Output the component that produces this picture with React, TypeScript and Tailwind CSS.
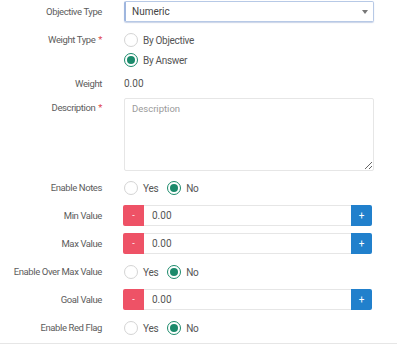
import { useState } from 'react';

const Radio = ({ checked, label, onClick }: { checked: boolean; label: string; onClick?: () => void }) => (
  <button type="button" onClick={onClick} className="flex items-center h-[20px]">
    <span
      className={
        checked
          ? 'w-[14px] h-[14px] rounded-full border border-[#1b8a6b] flex items-center justify-center bg-white'
          : 'w-[14px] h-[14px] rounded-full border border-[#d4d4d4] bg-white'
      }>
      {checked && <span className="w-[8px] h-[8px] rounded-full bg-[#1b8a6b]" />}
    </span>
    <span className="text-[10px] tracking-[-0.3px] text-[#555] ml-[5px]">{label}</span>
  </button>
);

const Label = ({ text, required }: { text: string; required?: boolean }) => (
  <div className="w-[102px] shrink-0 text-right text-[9.5px] tracking-[-0.4px] text-[#5c5c5c] leading-[20px]">
    {text}
    {required && <span className="text-[#e0474c] ml-[3px]">*</span>}
  </div>
);

const YesNo = ({ initial }: { initial: boolean }) => {
  const [value, setValue] = useState(initial);
  return (
    <div className="flex items-center gap-[9px]">
      <Radio checked={value} label="Yes" onClick={() => setValue(true)} />
      <Radio checked={!value} label="No" onClick={() => setValue(false)} />
    </div>
  );
};

const Stepper = () => (
  <div className="flex w-[249px] h-[21px]">
    <button className="w-[21px] h-[21px] bg-[#ee5266] text-white text-[9px] rounded-l-[2px] flex items-center justify-center">
      -
    </button>
    <input
      defaultValue="0.00"
      className="flex-1 min-w-0 h-[21px] border-y border-[#e6e6e6] px-[8px] text-[10px] text-[#555] outline-none"
    />
    <button className="w-[21px] h-[21px] bg-[#2180cc] text-white text-[10px] rounded-r-[2px] flex items-center justify-center">
      +
    </button>
  </div>
);

export default function App() {
  const [weightType, setWeightType] = useState('answer');

  return (
    <div className="w-[397px] h-[344px] bg-white overflow-hidden" style={{ fontFamily: 'Roboto, "Noto Sans", sans-serif' }}>
      <div className="border-b border-[#e6e6e6] pb-[5px]">
        {/* Objective Type */}
        <div className="flex items-center pt-[1px]">
          <Label text="Objective Type" />
          <div className="ml-[22px] w-[250px] h-[21px] border border-[#b7c9e6] border-l-[2px] border-l-[#9fb6de] rounded-[2px] flex items-center justify-between pl-[6px] pr-[5px] shadow-[0_1px_1px_rgba(150,170,210,0.5)]">
            <span className="text-[10px] text-[#444]">Numeric</span>
            <span className="w-0 h-0 border-l-[3px] border-r-[3px] border-t-[4px] border-l-transparent border-r-transparent border-t-[#777]" />
          </div>
        </div>

        {/* Weight Type */}
        <div className="flex mt-[8px]">
          <Label text="Weight Type" required />
          <div className="ml-[22px] flex flex-col">
            <Radio checked={weightType === 'objective'} label="By Objective" onClick={() => setWeightType('objective')} />
            <Radio checked={weightType === 'answer'} label="By Answer" onClick={() => setWeightType('answer')} />
          </div>
        </div>

        {/* Weight */}
        <div className="flex items-center mt-[4px]">
          <Label text="Weight" />
          <div className="ml-[22px] text-[10px] text-[#555] leading-[20px]">0.00</div>
        </div>

        {/* Description */}
        <div className="flex mt-[4px]">
          <Label text="Description" required />
          <textarea
            placeholder="Description"
            className="ml-[22px] w-[250px] h-[73px] border border-[#e6e6e6] rounded-[2px] px-[7px] py-[3px] text-[9.5px] text-[#555] placeholder:text-[#9a9a9a] outline-none"
          />
        </div>

        {/* Enable Notes */}
        <div className="flex items-center mt-[7px]">
          <Label text="Enable Notes" />
          <div className="ml-[22px]">
            <YesNo initial={false} />
          </div>
        </div>

        {/* Min Value */}
        <div className="flex items-center mt-[7px]">
          <Label text="Min Value" />
          <div className="ml-[21px]">
            <Stepper />
          </div>
        </div>

        {/* Max Value */}
        <div className="flex items-center mt-[7px]">
          <Label text="Max Value" />
          <div className="ml-[21px]">
            <Stepper />
          </div>
        </div>

        {/* Enable Over Max Value */}
        <div className="flex items-center mt-[8px]">
          <Label text="Enable Over Max Value" />
          <div className="ml-[22px]">
            <YesNo initial={false} />
          </div>
        </div>

        {/* Goal Value */}
        <div className="flex items-center mt-[7px]">
          <Label text="Goal Value" />
          <div className="ml-[21px]">
            <Stepper />
          </div>
        </div>

        {/* Enable Red Flag */}
        <div className="flex items-center mt-[8px]">
          <Label text="Enable Red Flag" />
          <div className="ml-[22px]">
            <YesNo initial={false} />
          </div>
        </div>
      </div>
    </div>
  );
}
